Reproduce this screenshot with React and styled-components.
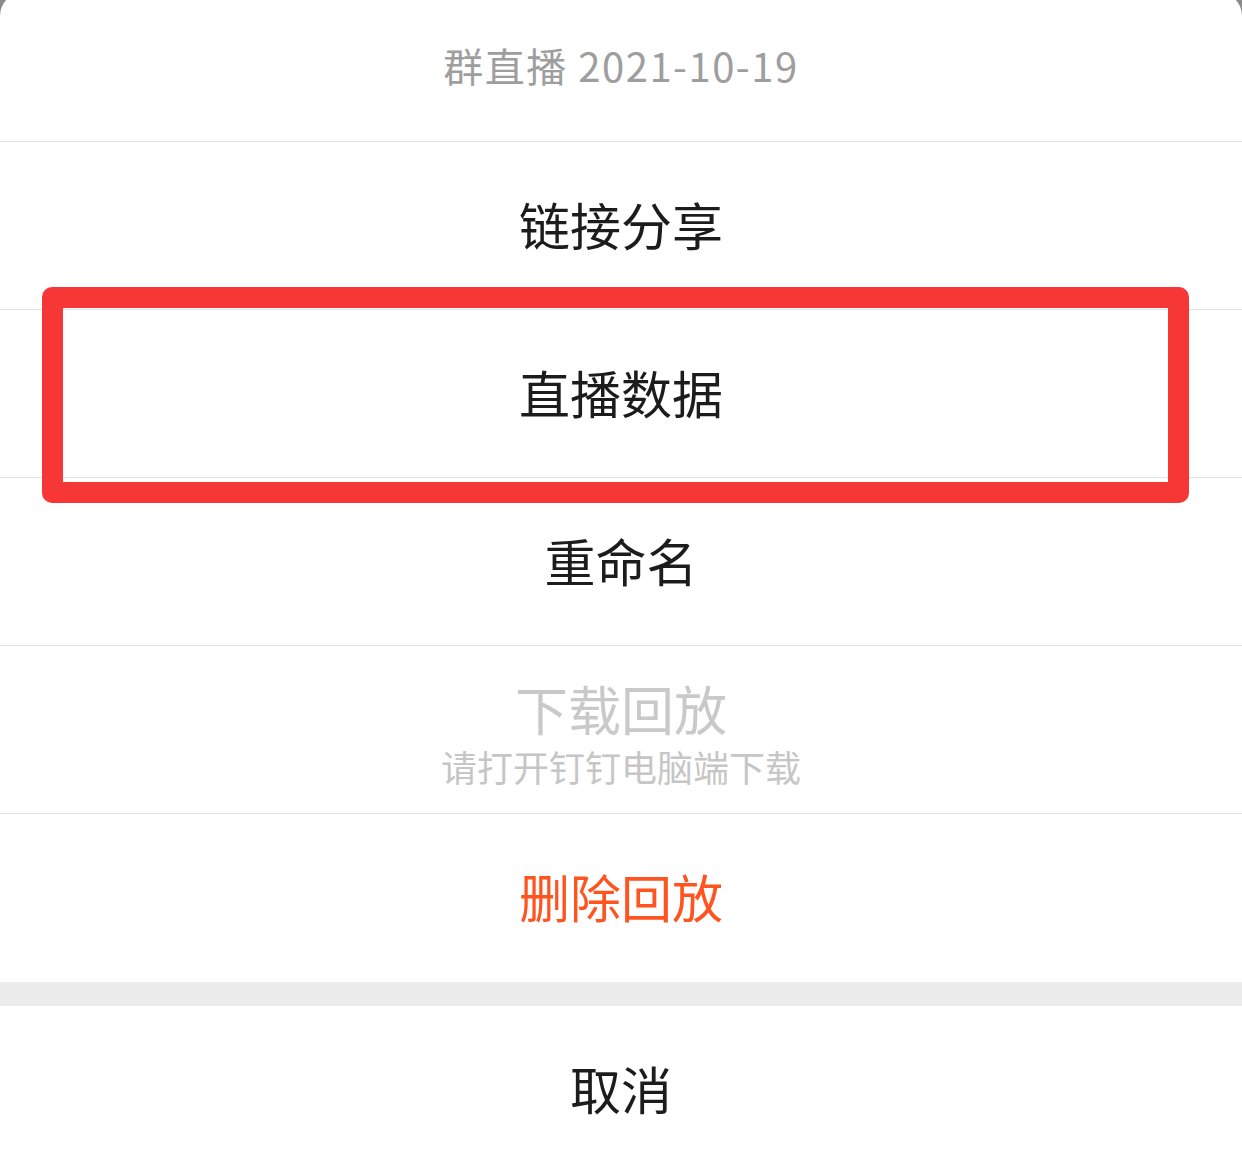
import React from "react";
import styled, { createGlobalStyle } from "styled-components";

const Global = createGlobalStyle`
  html, body { margin: 0; padding: 0; background: #8a8a8a; }
  body { width: 1242px; height: 1149px; overflow: hidden; font-family: "Noto Sans CJK SC", "Noto Sans", sans-serif; }
`;

const Sheet = styled.div`
  position: relative;
  margin-top: -8px;
  width: 1242px;
  height: 1157px;
  background: #ffffff;
  border-radius: 24px 24px 0 0;
  display: flex;
  flex-direction: column;
  overflow: hidden;
`;

const Header = styled.div`
  height: 150px;
  flex: none;
  display: flex;
  align-items: center;
  justify-content: center;
  box-sizing: border-box;
  padding-bottom: 3px;
  border-bottom: 1px solid #e3e3e3;
  color: #9e9e9e;
  font-size: 40px;
  letter-spacing: 1.5px;
`;

const Row = styled.div`
  height: 168px;
  flex: none;
  box-sizing: border-box;
  display: flex;
  flex-direction: column;
  align-items: center;
  justify-content: ${(p) => (p.$stacked ? "flex-start" : "center")};
  padding-top: ${(p) => (p.$stacked ? "32px" : "0")};
  padding-bottom: ${(p) => (p.$stacked ? "0" : "4px")};
  border-bottom: ${(p) => (p.$last ? "none" : "1px solid #e3e3e3")};
`;

const Label = styled.div`
  font-size: ${(p) => (p.$tone === "muted" ? "53px" : "51px")};
  line-height: 60px;
  color: ${(p) => (p.$tone === "danger" ? "#ff5420" : p.$tone === "muted" ? "#c9c9c9" : "#1c1c1c")};
`;

const Hint = styled.div`
  font-size: 36px;
  line-height: 40px;
  color: #c6c6c6;
  margin-top: 8px;
`;

const Gap = styled.div`
  height: 24px;
  flex: none;
  background: #ececec;
`;

const Cancel = styled(Row)`
  height: 170px;
  border-bottom: none;
  justify-content: flex-start;
  padding-top: 52px;
`;

const Highlight = styled.div`
  position: absolute;
  left: 42px;
  top: 295px;
  width: 1147px;
  height: 216px;
  box-sizing: border-box;
  border: 21px solid #f73636;
  border-radius: 10px;
  pointer-events: none;
`;

export default function App() {
  return (
    <>
      <Global />
      <Sheet>
        <Header>群直播 2021-10-19</Header>
        <Row><Label>链接分享</Label></Row>
        <Row><Label>直播数据</Label></Row>
        <Row><Label>重命名</Label></Row>
        <Row $stacked>
          <Label $tone="muted">下载回放</Label>
          <Hint>请打开钉钉电脑端下载</Hint>
        </Row>
        <Row $last><Label $tone="danger">删除回放</Label></Row>
        <Gap />
        <Cancel><Label>取消</Label></Cancel>
        <Highlight />
      </Sheet>
    </>
  );
}
